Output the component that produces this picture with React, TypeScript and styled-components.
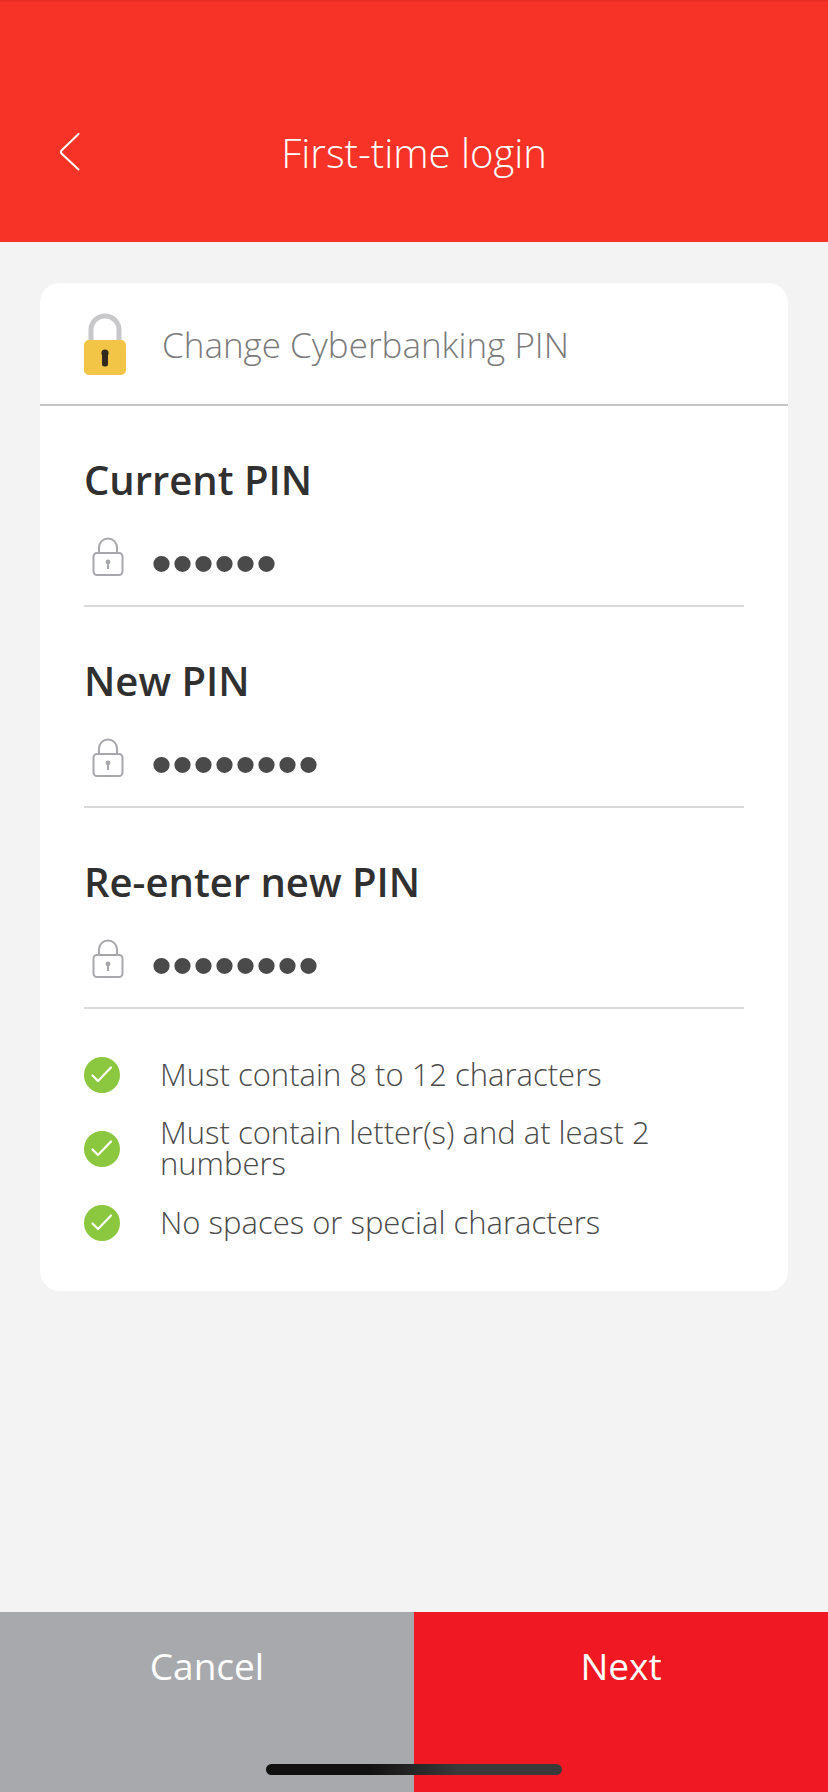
import React, { useState } from "react";
import styled, { createGlobalStyle } from "styled-components";

const GlobalStyle = createGlobalStyle`
  *, *::before, *::after { box-sizing: border-box; }
  body {
    margin: 0;
    background: #f3f3f3;
    font-family: "Open Sans", "Noto Sans", sans-serif;
  }
`;

const Screen = styled.div`
  min-height: 100vh;
  display: flex;
  flex-direction: column;
  background: #f3f3f3;
`;

const Header = styled.header`
  display: grid;
  grid-template-columns: 80px 1fr 80px;
  align-items: center;
  height: 242px;
  padding: 64px 28px 0;
  background: linear-gradient(#e42a20, #f73328 3px);
  color: #fff;
`;

const BackButton = styled.button`
  width: 80px;
  height: 80px;
  padding: 0;
  display: flex;
  align-items: center;
  justify-content: center;
  border: 0;
  background: none;
  color: inherit;
`;

const Title = styled.h1`
  margin: 0;
  text-align: center;
  font-size: 40px;
  line-height: 56px;
  font-weight: 300;
`;

const Main = styled.main`
  flex: 1;
  padding: 41px 40px;
`;

const Card = styled.form`
  background: #fff;
  border-radius: 20px;
`;

const CardHeader = styled.div`
  display: flex;
  align-items: center;
  gap: 36px;
  height: 123px;
  padding: 0 44px;
  border-bottom: 2px solid #c6c6c8;
`;

const CardTitle = styled.h2`
  margin: 0;
  padding-top: 2px;
  font-size: 35px;
  line-height: 48px;
  font-weight: 300;
  color: #7b7b7b;
`;

const CardBody = styled.div`
  display: flex;
  flex-direction: column;
  gap: 48px;
  padding: 50px 44px;
`;

const FieldList = styled.div`
  display: flex;
  flex-direction: column;
  gap: 50px;
`;

const Field = styled.div`
  display: flex;
  flex-direction: column;
`;

const Label = styled.label`
  font-size: 40px;
  line-height: 48px;
  font-weight: 600;
  color: #303030;
`;

const InputRow = styled.div`
  display: flex;
  align-items: center;
  gap: 27px;
  height: 103px;
  padding: 4px 0 0 8px;
  border-bottom: 2px solid #dadadc;
`;

const PinInput = styled.input`
  flex: 1;
  min-width: 0;
  height: 96px;
  padding: 14px 0 0;
  border: 0;
  outline: 0;
  background: none;
  color: #4a4a4a;
  font-family: "Liberation Sans", Arial, sans-serif;
  font-size: 60px;
`;

const Rules = styled.ul`
  display: flex;
  flex-direction: column;
  gap: 24px;
  margin: 0;
  padding: 0;
  list-style: none;
`;

const Rule = styled.li`
  display: flex;
  align-items: center;
  gap: 40px;
  min-height: 36px;
  font-size: 31px;
  line-height: 31px;
  font-weight: 300;
  color: #4a4a4a;

  svg { flex: none; }
`;

const RuleText = styled.span`
  padding-bottom: 2px;
`;

const Footer = styled.footer`
  position: relative;
  display: grid;
  grid-template-columns: 1fr 1fr;
  height: 180px;
`;

const ActionButton = styled.button<{ $primary?: boolean }>`
  display: flex;
  justify-content: center;
  align-items: flex-start;
  padding: 28px 0 0;
  border: 0;
  background: ${(p) => (p.$primary ? "#f01822" : "#a8a9ac")};
  color: #fff;
  font-family: inherit;
  font-size: 37px;
  line-height: 52px;
  font-weight: 400;
`;

const HomeIndicator = styled.div`
  position: absolute;
  left: 50%;
  bottom: 17px;
  width: 296px;
  height: 11px;
  transform: translateX(-50%);
  border-radius: 6px;
  background: linear-gradient(90deg, #111 35%, #3a3a3a 65%);
`;

const BackIcon = () => (
  <svg width="24" height="40" viewBox="0 0 24 40" fill="none" stroke="currentColor" strokeWidth="2" strokeLinecap="round" strokeLinejoin="round" aria-hidden="true">
    <path d="M22.500 1L5.500 17.500Q4.300 19 5.500 20.500L22.500 36.500" />
  </svg>
);

const GoldLock = () => (
  <svg width="42" height="62" viewBox="0 0 42 62" aria-hidden="true">
    <path d="M7 30V17a14 14 0 0 1 28 0v13" fill="none" stroke="#c8c8ca" strokeWidth="5" />
    <rect y="27" width="42" height="35" rx="5" fill="#f3c546" />
    <circle cx="21" cy="40" r="3.600" fill="#33291f" />
    <rect x="18" y="39" width="6" height="14.500" rx="2.500" fill="#33291f" />
  </svg>
);

const FieldLock = () => (
  <svg width="32" height="40" viewBox="0 0 32 40" fill="none" stroke="#a7a8ab" strokeWidth="2" aria-hidden="true">
    <path d="M7 16V10.500a9 9 0 0 1 18 0V16" />
    <rect x="1.500" y="16" width="29" height="22" rx="3.500" />
    <circle cx="16" cy="25" r="2.400" fill="#a7a8ab" stroke="none" />
    <path d="M16 25v7" />
  </svg>
);

const CheckBadge = () => (
  <svg width="36" height="36" viewBox="0 0 36 36" fill="none" aria-hidden="true">
    <circle cx="18" cy="18" r="18" fill="#8cc83f" />
    <path d="M8.500 18.500l5.500 5.500L27 10.500" stroke="#fff" strokeWidth="2.200" strokeLinecap="round" strokeLinejoin="round" />
  </svg>
);

const fields = [
  { id: "current-pin", label: "Current PIN", value: "123456" },
  { id: "new-pin", label: "New PIN", value: "abcdef12" },
  { id: "confirm-pin", label: "Re-enter new PIN", value: "abcdef12" },
];

const rules = [
  "Must contain 8 to 12 characters",
  "Must contain letter(s) and at least 2 numbers",
  "No spaces or special characters",
];

function PinField({ id, label, value }: { id: string; label: string; value: string }) {
  const [pin, setPin] = useState(value);
  return (
    <Field>
      <Label htmlFor={id}>{label}</Label>
      <InputRow>
        <FieldLock />
        <PinInput id={id} type="password" value={pin} onChange={(e) => setPin(e.target.value)} />
      </InputRow>
    </Field>
  );
}

export default function App() {
  return (
    <Screen>
      <GlobalStyle />
      <Header>
        <BackButton type="button" aria-label="Back">
          <BackIcon />
        </BackButton>
        <Title>First-time login</Title>
      </Header>
      <Main>
        <Card id="pin-form" onSubmit={(e) => e.preventDefault()}>
          <CardHeader>
            <GoldLock />
            <CardTitle>Change Cyberbanking PIN</CardTitle>
          </CardHeader>
          <CardBody>
            <FieldList>
              {fields.map((field) => (
                <PinField key={field.id} {...field} />
              ))}
            </FieldList>
            <Rules>
              {rules.map((rule) => (
                <Rule key={rule}>
                  <CheckBadge />
                  <RuleText>{rule}</RuleText>
                </Rule>
              ))}
            </Rules>
          </CardBody>
        </Card>
      </Main>
      <Footer>
        <ActionButton type="button">Cancel</ActionButton>
        <ActionButton type="submit" form="pin-form" $primary>
          Next
        </ActionButton>
        <HomeIndicator />
      </Footer>
    </Screen>
  );
}
